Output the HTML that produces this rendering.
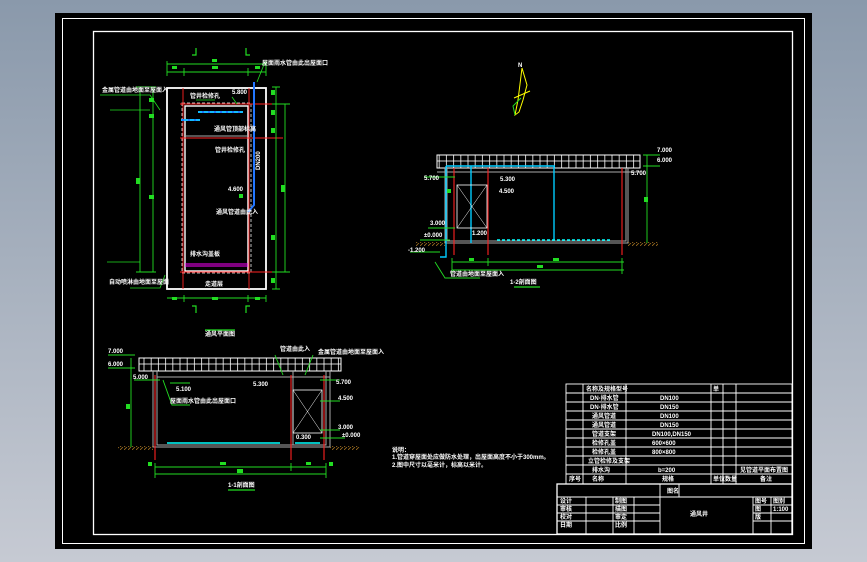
<!DOCTYPE html>
<html><head><meta charset="utf-8"><style>
html,body{margin:0;padding:0;width:867px;height:562px;overflow:hidden;background:linear-gradient(#8a99ab,#c6cad3);}
svg{position:absolute;left:0;top:0}
text{font-family:"Liberation Sans","Noto Sans CJK SC",sans-serif;fill:#fff;font-size:6px;font-weight:bold}
.gr{fill:#2d2}
</style></head><body>
<svg width="867" height="562" viewBox="0 0 867 562">
<defs>
<pattern id="g" width="7.2" height="7" patternUnits="userSpaceOnUse"><rect width="7.2" height="7" fill="none" stroke="#fff" stroke-width="0.8"/></pattern>
<pattern id="h" width="4" height="3" patternUnits="userSpaceOnUse"><path d="M0 3L3 0" stroke="#a07020" stroke-width="0.8"/></pattern>
</defs>
<rect x="55" y="13" width="757" height="536" fill="#000"/>
<rect x="62.5" y="18.5" width="742" height="525" fill="none" stroke="#fff" stroke-width="1"/>
<rect x="93.5" y="31.5" width="699" height="503" fill="none" stroke="#fff" stroke-width="1.3"/>

<!-- PLAN -->
<g fill="none">
<rect x="167" y="88" width="99" height="201" stroke="#fff" stroke-width="1.8"/>
<rect x="182" y="103" width="69" height="170" stroke="#bbb" stroke-dasharray="3,2"/>
<rect x="185" y="106" width="63" height="165" stroke="#fff" stroke-width="1.4"/>
<path d="M180 104H283M180 138H283M180 272H283M183 88V289M249 88V289" stroke="#f22" stroke-width="0.9"/>
<path d="M185 136H248" stroke="#aaa"/>
<path d="M254 82V205L248 212M198 112H243M200 120H181" stroke="#27f" stroke-width="2"/>
<path d="M198 112H243M200 120H181" stroke="#0ff" stroke-width="1" stroke-dasharray="4,2"/>
<path d="M185 264H248M185 266H248" stroke="#f0f" stroke-width="1"/>
<path d="M167 64H266M167 72H266M167 61V76M184 68V76M248 68V76M266 61V76M167 298H266M184 295V302M248 295V302M266 295V302M140 87V272M153 87V272M136 87H156M136 272H156M276 87V289M285 104V272M272 87H280M272 104H290M272 272H290M272 289H280" stroke="#2d2" stroke-width="0.9"/>
<path d="M196 48V55H192M246 48V55H250M196 313V306H192M246 313V306H250" stroke="#2d2" stroke-width="1.2"/>
<path d="M100 95H150L160 110M110 110H150M107 262H140M130 288H160L165 275M265 62L257 82M196 100H215M232 97L237 104" stroke="#2d2" stroke-width="0.8"/>
<path d="M205 330H235" stroke="#2d2" stroke-width="1.2"/>
</g>
<g class="gr">
<rect x="172" y="66" width="5" height="3"/><rect x="212" y="66" width="6" height="3"/><rect x="255" y="66" width="5" height="3"/>
<rect x="212" y="59" width="5" height="3"/>
<rect x="136" y="178" width="4" height="6"/><rect x="149" y="195" width="5" height="4"/><rect x="149" y="98" width="5" height="4"/><rect x="149" y="114" width="5" height="4"/>
<rect x="271" y="90" width="4" height="5"/><rect x="271" y="110" width="4" height="5"/><rect x="271" y="128" width="4" height="5"/><rect x="281" y="185" width="4" height="7"/><rect x="271" y="235" width="4" height="5"/><rect x="271" y="278" width="4" height="5"/>
<rect x="172" y="297" width="5" height="3"/><rect x="212" y="297" width="6" height="3"/><rect x="255" y="297" width="5" height="3"/>
<rect x="239" y="194" width="4" height="4"/>
</g>
<text x="102" y="92" font-size="5">金属管道由地面至屋面入</text>
<text x="262" y="65" font-size="5">屋面雨水管由此出屋面口</text>
<text x="190" y="98" font-size="5">管井检修孔</text>
<text x="232" y="94" font-size="5">5.800</text>
<text x="214" y="131" font-size="5">通风管顶部标高</text>
<text x="215" y="152" font-size="5">管井检修孔</text>
<text x="228" y="191" font-size="5">4.600</text>
<text x="216" y="214" font-size="5">通风管道由此入</text>
<text x="190" y="256" font-size="5">排水沟盖板</text>
<text x="205" y="286" font-size="7">走道层</text>
<text x="260" y="170" font-size="5" transform="rotate(-90 260 170)">DN200</text>
<text x="109" y="284" font-size="5">自动喷淋由地面至屋面</text>
<text x="205" y="336" font-size="9">通风平面图</text>

<!-- North arrow -->
<g fill="none" stroke="#ff0" stroke-width="1"><path d="M522 68L527 85L523 100L519 112L515 115L518 100Z"/><path d="M514 98L530 91"/></g>
<path d="M515 115L513 106L521 98" stroke="#2d2" fill="none"/>
<text x="518" y="67" font-size="9">N</text>

<!-- SECTION 2-2 -->
<rect x="437" y="155" width="203" height="13" fill="url(#g)" stroke="#fff"/>
<g fill="none">
<path d="M445 168V243H628V168M447 168V241H626V168M437 172H640" stroke="#aaa"/>
<path d="M454 168V255M488 168V255M622 168V255" stroke="#f22" stroke-width="1.1"/>
<path d="M446 166V257H440M471 166V243M554 166V240M446 166H555" stroke="#0cf" stroke-width="1.4"/>
<rect x="457" y="185" width="30" height="43" stroke="#fff" stroke-width="0.8"/>
<path d="M457 185L487 228M487 185L457 228" stroke="#fff" stroke-width="0.5"/>
<path d="M497 240H612" stroke="#0ff" stroke-width="1.5" stroke-dasharray="3,2"/>
<path d="M452 262H624M452 270H624M452 258V274M488 258V266M622 258V274M647 155V243M643 155H660M643 166H660M424 177H455M428 228H455M420 240H450M410 252H440M435 262L445 278H480" stroke="#2d2" stroke-width="0.9"/>
<path d="M514 287H540" stroke="#2d2" stroke-width="1.2"/>
</g>
<g class="gr"><rect x="469" y="258" width="5" height="3"/><rect x="553" y="258" width="6" height="3"/><rect x="537" y="265" width="6" height="3"/><rect x="644" y="197" width="4" height="5"/><rect x="447" y="189" width="4" height="4"/></g>
<rect x="415" y="242" width="30" height="4" fill="url(#h)"/><rect x="628" y="242" width="30" height="4" fill="url(#h)"/>
<text x="424" y="180" font-size="5">5.700</text>
<text x="500" y="181" font-size="5">5.300</text>
<text x="499" y="193" font-size="5">4.500</text>
<text x="631" y="175" font-size="5">5.700</text>
<text x="657" y="152" font-size="5">7.000</text>
<text x="657" y="162" font-size="5">6.000</text>
<text x="430" y="225" font-size="5">3.000</text>
<text x="424" y="237" font-size="5">±0.000</text>
<text x="408" y="252" font-size="5">-1.200</text>
<text x="472" y="235" font-size="5">1.200</text>
<text x="510" y="284" font-size="8">1-2剖面图</text>
<text x="450" y="276" font-size="4">管道由地面至屋面入</text>

<!-- SECTION 1-1 -->
<rect x="139" y="358" width="202" height="13" fill="url(#g)" stroke="#fff"/>
<g fill="none">
<path d="M153 371V447H330V371M157 371V445H326V371M157 377H330M293 371V445" stroke="#aaa"/>
<path d="M155 375V460M291 375V460M324 375V460" stroke="#f22" stroke-width="1.1"/>
<rect x="293" y="390" width="29" height="43" stroke="#fff" stroke-width="0.8"/>
<path d="M293 390L322 433M322 390L293 433" stroke="#fff" stroke-width="0.5"/>
<path d="M167 443H280M295 443H320" stroke="#0ff" stroke-width="1.5"/>
<path d="M155 467H326M155 474H326M155 463V478M291 463V471M326 463V478M131 358V447M108 355H135M108 368H135M134 380H160M170 383H190M320 380H340M320 401H340M320 430H340M320 438H345M163 380L172 405H190M275 355L283 375M313 355L305 375" stroke="#2d2" stroke-width="0.9"/>
<path d="M228 490H255" stroke="#2d2" stroke-width="1.2"/>
</g>
<g class="gr"><rect x="148" y="462" width="4" height="4"/><rect x="220" y="462" width="6" height="3"/><rect x="306" y="462" width="5" height="3"/><rect x="329" y="462" width="4" height="4"/><rect x="237" y="469" width="6" height="4"/><rect x="126" y="404" width="4" height="5"/></g>
<rect x="118" y="446" width="35" height="4" fill="url(#h)"/><rect x="330" y="446" width="30" height="4" fill="url(#h)"/>
<text x="108" y="353" font-size="5">7.000</text>
<text x="108" y="366" font-size="5">6.000</text>
<text x="133" y="379" font-size="5">5.000</text>
<text x="176" y="391" font-size="5">5.100</text>
<text x="253" y="386" font-size="5">5.300</text>
<text x="336" y="384" font-size="5">5.700</text>
<text x="338" y="400" font-size="5">4.500</text>
<text x="338" y="429" font-size="5">3.000</text>
<text x="342" y="437" font-size="5">±0.000</text>
<text x="170" y="403" font-size="5">屋面雨水管由此出屋面口</text>
<text x="280" y="351" font-size="5">管道由此入</text>
<text x="318" y="354" font-size="5">金属管道由地面至屋面入</text>
<text x="296" y="439" font-size="5">0.300</text>
<text x="228" y="487" font-size="8">1-1剖面图</text>
<text x="392" y="452" font-size="5">说明：</text>
<text x="392" y="459" font-size="4.5">1.管道穿屋面处应做防水处理，出屋面高度不小于300mm。</text>
<text x="392" y="467" font-size="4.5">2.图中尺寸以毫米计，标高以米计。</text>

<!-- TABLE -->
<g stroke="#fff" fill="none" stroke-width="0.9">
<rect x="566" y="384" width="226" height="100"/>
<path d="M566 393H792M566 402H792M566 411H792M566 420H792M566 429H792M566 438H792M566 447H792M566 456H792M566 465H792M566 474H792M583 384V484M626 384V484M711 384V484M723 384V484M736 384V484"/>
<rect x="557" y="484" width="235" height="50" stroke-width="1.3"/>
<path d="M660 484V497M679 484V497M557 497H792M557 505H660M557 513H660M557 521H660M753 505H792M753 513H792M753 521H792M586 497V534M613 497V534M634 497V534M660 497V534M753 497V534M771 497V534"/>
</g>
<g font-size="4.5">
<text x="586" y="391">名称及规格型号</text><text x="713" y="391">单</text>
<text x="590" y="400">DN·排水管</text><text x="660" y="400">DN100</text>
<text x="590" y="409">DN·排水管</text><text x="660" y="409">DN150</text>
<text x="592" y="418">通风管道</text><text x="660" y="418">DN100</text>
<text x="592" y="427">通风管道</text><text x="660" y="427">DN150</text>
<text x="592" y="436">管道支架</text><text x="652" y="436">DN100,DN150</text>
<text x="592" y="445">检修孔盖</text><text x="652" y="445">600×600</text>
<text x="592" y="454">检修孔盖</text><text x="652" y="454">800×800</text>
<text x="588" y="463">立管检修及支架</text>
<text x="592" y="472">排水沟</text><text x="658" y="472">b=200</text><text x="740" y="472">见管道平面布置图</text>
<text x="569" y="481">序号</text><text x="592" y="481">名称</text><text x="662" y="481">规格</text><text x="713" y="481">单位</text><text x="725" y="481">数量</text><text x="760" y="481">备注</text>
<text x="667" y="493" font-size="6">图名</text>
<text x="560" y="503">设计</text><text x="560" y="511">审核</text><text x="560" y="519">校对</text><text x="560" y="527">日期</text>
<text x="615" y="503">制图</text><text x="615" y="511">描图</text><text x="615" y="519">审定</text><text x="615" y="527">比例</text>
<text x="755" y="503">图号</text><text x="773" y="503">图别</text><text x="755" y="511">图</text><text x="773" y="511">1:100</text><text x="755" y="519">版</text>
<text x="690" y="516" font-size="7">通风井</text>
</g>
</svg>
</body></html>
